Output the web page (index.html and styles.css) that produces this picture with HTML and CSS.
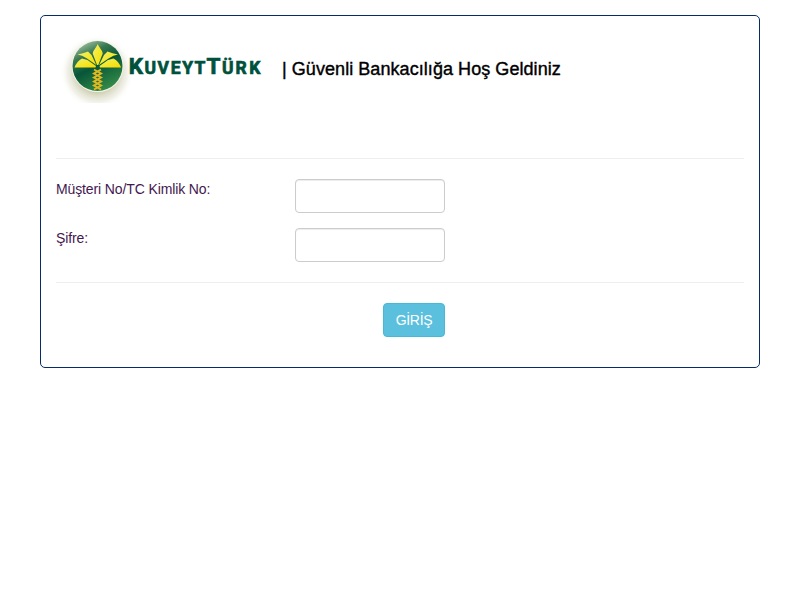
FILE: index.html
```html
<!DOCTYPE html>
<html lang="tr">
<head>
<meta charset="utf-8">
<title>Kuveyt Türk</title>
<link rel="stylesheet" href="styles.css">
</head>
<body>
<main class="panel">
  <header class="header">
    <svg class="logo" width="206" height="73" viewBox="0 0 206 73">
      <defs>
        <radialGradient id="halo"><stop offset=".55" stop-color="#cfcfb4"/><stop offset=".8" stop-color="#e6e6d8" stop-opacity=".6"/><stop offset="1" stop-color="#fff" stop-opacity="0"/></radialGradient>
        <linearGradient id="ball" x1=".1" y1="0" x2=".6" y2="1"><stop offset="0" stop-color="#b9d3b6"/><stop offset=".3" stop-color="#37774f"/><stop offset=".55" stop-color="#075638"/><stop offset="1" stop-color="#338a47"/></linearGradient>
        <linearGradient id="leaf" x1="0" y1="0" x2="1" y2="1"><stop offset="0" stop-color="#f0ee76"/><stop offset=".5" stop-color="#f4e82c"/><stop offset="1" stop-color="#fad800"/></linearGradient>
      </defs>
      <ellipse cx="41" cy="42" rx="37" ry="37" fill="url(#halo)"/>
      <circle cx="41.500" cy="36.200" r="25.900" fill="#f2f5e9"/>
      <circle cx="41.500" cy="36" r="25" fill="url(#ball)"/>
      <g fill="url(#leaf)">
        <path d="M41.700 14C43.500 18 46.500 20.500 46.700 23.500L42.300 35H41L36.700 23.500C37 20.500 40 18 41.700 14Z"/>
        <path d="M21.500 24.500Q27 23.500 32 21.500L35.500 25L40.300 35L31 28.500Q26 25 21.500 24.500Z"/>
        <path d="M62 24.500Q56.500 23.500 51.500 21.500L48 25L43 35L52.500 28.500Q57.500 25 62 24.500Z"/>
        <path d="M18.500 37.500Q21 31 26 28.500L31.500 30L40 36L39.500 37.500Z"/>
        <path d="M65 37.500Q62.500 31 57.500 28.500L52 30L43.500 36L44 37.500Z"/>
      </g>
      <path d="M38 39.500L45 43.500L38 47.500L45 51.500L38 55.500L45 59.500M45 39.500L38 43.500L45 47.500L38 51.500L45 55.500L38 59.500" fill="none" stroke="#e0b820" stroke-width="2"/>
      <text class="wordmark" y="43.700"><tspan class="cap" x="72.800">K</tspan><tspan x="88.500 101.500 114.700 126.200 138.500">UVEYT</tspan><tspan class="cap" x="150.500">T</tspan><tspan x="166 179.600 193.200">ÜRK</tspan></text>
    </svg>
    <h1 class="title">| Güvenli Bankacılığa Hoş Geldiniz</h1>
  </header>
  <form class="form">
    <div class="row"><label for="customer">Müşteri No/TC Kimlik No:</label><input id="customer" type="text"></div>
    <div class="row"><label for="password">Şifre:</label><input id="password" type="password"></div>
    <div class="actions"><button type="button">GİRİŞ</button></div>
  </form>
</main>
</body>
</html>
```
FILE: styles.css
```css
* { box-sizing: border-box; }
body { margin: 0; background: #fff; color: #43184f; font: 14px/20px "Liberation Sans", Arial, sans-serif; }
.panel { width: 720px; height: 353px; margin: 15px auto 0; padding: 14px 15px; border: 1px solid #052c66; border-radius: 5px; }
.header { display: flex; height: 129px; border-bottom: 1px solid #eee; }
.logo { flex: none; }
.wordmark { font: 700 17.5px Roboto, "Liberation Sans", sans-serif; fill: #00513b; stroke: #00513b; stroke-width: .7px; }
.cap { font-size: 22.5px; }
.title { margin: 29px 0 0 20px; color: #000; font-size: 18px; line-height: 20px; font-weight: 500; letter-spacing: .06px; -webkit-text-stroke: .4px #000; white-space: nowrap; }
.form { padding-top: 20px; }
.row { display: flex; height: 34px; margin-bottom: 15px; }
label { width: 239px; letter-spacing: -.12px; }
input { width: 150px; height: 34px; padding: 6px 12px; border: 1px solid #ccc; border-radius: 4px; box-shadow: inset 0 1px 1px rgba(0,0,0,.075); }
.actions { display: flex; margin-top: 20px; padding-top: 20px; padding-left: 327px; border-top: 1px solid #eee; }
button { width: 62px; height: 34px; padding: 0; border: 1px solid #46b8da; border-radius: 4px; background: #5bc0de; color: #fff; font: 14px/20px "Liberation Sans", Arial, sans-serif; letter-spacing: -.3px; }
```
